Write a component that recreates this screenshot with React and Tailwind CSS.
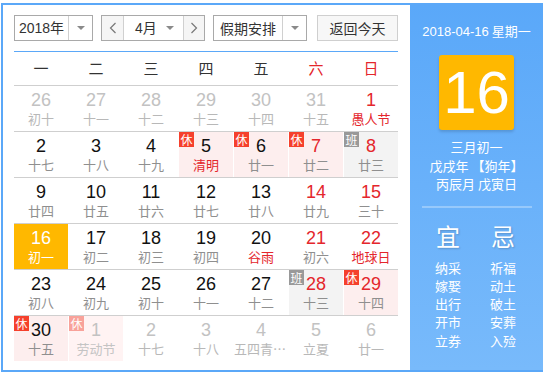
import React from 'react';

const CN = '"Microsoft YaHei", "Noto Sans CJK SC", sans-serif';
const NUM = '"Liberation Sans", Arial, "Noto Sans CJK SC", sans-serif';

const weekdays = ['一', '二', '三', '四', '五', '六', '日'];

// o: other month, r: red number, lr: red lunar, tag: 休/班, dim: faded tag
const rows = [
  [
    { d: 26, l: '初十', o: 1 },
    { d: 27, l: '十一', o: 1 },
    { d: 28, l: '十二', o: 1 },
    { d: 29, l: '十三', o: 1 },
    { d: 30, l: '十四', o: 1 },
    { d: 31, l: '十五', o: 1 },
    { d: 1, l: '愚人节', r: 1, lr: 1 },
  ],
  [
    { d: 2, l: '十七' },
    { d: 3, l: '十八' },
    { d: 4, l: '十九' },
    { d: 5, l: '清明', lr: 1, tag: '休' },
    { d: 6, l: '廿一', tag: '休' },
    { d: 7, l: '廿二', r: 1, tag: '休' },
    { d: 8, l: '廿三', r: 1, tag: '班' },
  ],
  [
    { d: 9, l: '廿四' },
    { d: 10, l: '廿五' },
    { d: 11, l: '廿六' },
    { d: 12, l: '廿七' },
    { d: 13, l: '廿八' },
    { d: 14, l: '廿九', r: 1 },
    { d: 15, l: '三十', r: 1 },
  ],
  [
    { d: 16, l: '初一', today: 1 },
    { d: 17, l: '初二' },
    { d: 18, l: '初三' },
    { d: 19, l: '初四' },
    { d: 20, l: '谷雨', lr: 1 },
    { d: 21, l: '初六', r: 1 },
    { d: 22, l: '地球日', r: 1, lr: 1 },
  ],
  [
    { d: 23, l: '初八' },
    { d: 24, l: '初九' },
    { d: 25, l: '初十' },
    { d: 26, l: '十一' },
    { d: 27, l: '十二' },
    { d: 28, l: '十三', r: 1, tag: '班' },
    { d: 29, l: '十四', r: 1, tag: '休' },
  ],
  [
    { d: 30, l: '十五', tag: '休' },
    { d: 1, l: '劳动节', o: 1, tag: '休', dim: 1 },
    { d: 2, l: '十七', o: 1 },
    { d: 3, l: '十八', o: 1 },
    { d: 4, l: '五四青年节', o: 1 },
    { d: 5, l: '立夏', o: 1 },
    { d: 6, l: '廿一', o: 1 },
  ],
];

const yi = ['纳采', '嫁娶', '出行', '开市', '立券'];
const ji = ['祈福', '动土', '破土', '安葬', '入殓'];

const Caret = () => (
  <span className="block w-0 h-0 border-l-[4px] border-r-[4px] border-t-[4px] border-l-transparent border-r-transparent border-t-[#8a8a8a]" />
);

const DayCell = ({ c }) => {
  let bg = '';
  if (c.today) bg = 'bg-[#ffb800]';
  else if (c.tag === '休') bg = c.dim ? 'bg-[#fff3f3]' : 'bg-[#fdeeee]';
  else if (c.tag === '班') bg = 'bg-[#f3f3f3]';

  let numColor = 'text-[#111]';
  if (c.today) numColor = 'text-white';
  else if (c.o) numColor = 'text-[#c2c2c2]';
  else if (c.r) numColor = 'text-[#e4262c]';

  let lunarColor = 'text-[#8f8f8f]';
  if (c.today) lunarColor = 'text-white';
  else if (c.o) lunarColor = c.dim ? 'text-[#c4c4c4]' : 'text-[#b8b8b8]';
  else if (c.lr) lunarColor = 'text-[#e4262c]';

  const long = c.l.length > 4;

  return (
    <div className={`relative h-[45px] flex flex-col items-center pt-[4px] ${bg}`}>
      {c.tag && (
        <span
          className={`absolute left-0 top-0 w-[15px] h-[15px] flex items-center justify-center text-[12px] leading-none text-white ${
            c.tag === '班' ? 'bg-[#999]' : c.dim ? 'bg-[#f8a29a]' : 'bg-[#f5402c]'
          }`}
          style={{ fontFamily: CN }}
        >
          {c.tag}
        </span>
      )}
      <span className={`text-[18px] leading-[20px] ${numColor}`} style={{ fontFamily: NUM }}>
        {c.d}
      </span>
      <span
        className={`text-[13px] leading-[18px] whitespace-nowrap ${long ? 'w-[54px] overflow-hidden text-ellipsis text-center' : ''} ${lunarColor}`}
        style={{ fontFamily: CN }}
      >
        {c.l}
      </span>
    </div>
  );
};

export default function App() {
  return (
    <div className="w-[543px] h-[376px] bg-white overflow-hidden pt-[3px] pl-[1px]">
      <div className="flex w-[544px] h-[369px] border-2 border-[#5ba8f8]">
        {/* calendar */}
        <div className="w-[407px] pl-[11px] pr-[12px] pt-[10px]">
          <div className="flex items-center h-[26px] text-[14px] text-[#333]" style={{ fontFamily: CN }}>
            <div className="flex items-center w-[79px] h-[26px] border border-[#a9a9a9]">
              <span className="flex-1 text-center" style={{ fontFamily: NUM }}>2018<span style={{ fontFamily: CN }}>年</span></span>
              <span className="w-[24px] h-full border-l border-[#d0d0d0] flex items-center justify-center">
                <Caret />
              </span>
            </div>
            <div className="flex items-center ml-[8px] w-[104px] h-[26px] border border-[#a9a9a9]">
              <span className="w-[22px] h-full flex items-center justify-center bg-[#f5f5f5] border-r border-[#d0d0d0]">
                <svg width="8" height="12" viewBox="0 0 8 12"><path d="M6.5 1 L1.5 6 L6.5 11" fill="none" stroke="#777" strokeWidth="1.2" /></svg>
              </span>
              <span className="flex-1 flex items-center justify-between pl-[11px] pr-[9px]">
                <span style={{ fontFamily: NUM }}>4<span style={{ fontFamily: CN }}>月</span></span>
                <Caret />
              </span>
              <span className="w-[21px] h-full flex items-center justify-center bg-[#f5f5f5] border-l border-[#d0d0d0]">
                <svg width="8" height="12" viewBox="0 0 8 12"><path d="M1.5 1 L6.5 6 L1.5 11" fill="none" stroke="#777" strokeWidth="1.2" /></svg>
              </span>
            </div>
            <div className="flex items-center ml-[8px] w-[94px] h-[26px] border border-[#a9a9a9]">
              <span className="flex-1 text-center">假期安排</span>
              <span className="w-[24px] h-full border-l border-[#d0d0d0] flex items-center justify-center">
                <Caret />
              </span>
            </div>
            <button className="ml-[10px] w-[81px] h-[26px] border border-[#cfcfcf] bg-[#f7f7f7] text-[#333]">
              返回今天
            </button>
          </div>

          <div className="mt-[10px] h-[1px] bg-[#5ba8f8]" />

          <div className="grid grid-cols-7 gap-x-[1px] h-[34px] border-b border-[#cfcfcf]" style={{ fontFamily: CN }}>
            {weekdays.map((w, i) => (
              <div
                key={w}
                className={`flex items-center justify-center text-[15px] ${i >= 5 ? 'text-[#e4262c]' : 'text-[#333]'}`}
              >
                {w}
              </div>
            ))}
          </div>

          {rows.map((r, ri) => (
            <div
              key={ri}
              className={`grid grid-cols-7 gap-x-[1px] ${ri < rows.length - 1 ? 'border-b border-[#cfcfcf]' : ''}`}
            >
              {r.map((c, ci) => (
                <DayCell key={ci} c={c} />
              ))}
            </div>
          ))}
        </div>

        {/* side panel */}
        <div
          className="w-[133px] bg-gradient-to-b from-[#5aa8f9] to-[#78bafb] text-white flex flex-col items-center"
          style={{ fontFamily: CN }}
        >
          <div className="mt-[16px] text-[13px] leading-[20px] whitespace-nowrap">
            <span style={{ fontFamily: NUM }}>2018-04-16</span> 星期一
          </div>
          <div className="mt-[13px] w-[75px] h-[75px] rounded-[3px] bg-[#ffb800] shadow-[0_2px_3px_rgba(0,0,0,0.15)] flex items-center justify-center">
            <span className="text-[60px] leading-none" style={{ fontFamily: NUM }}>16</span>
          </div>
          <div className="mt-[8px] text-[13px] leading-[18.5px] text-center whitespace-nowrap">
            <div>三月初一</div>
            <div>戊戌年 【狗年】</div>
            <div>丙辰月 戊寅日</div>
          </div>
          <div className="mt-[12px] w-[110px] h-[2px] bg-white/30" />
          <div className="flex justify-center gap-[29px] mt-[14px] pr-[2px]">
            <div className="flex flex-col items-center">
              <div className="text-[24px] leading-[28px] [text-shadow:1px_1px_2px_rgba(0,0,0,0.2)]">宜</div>
              <div className="mt-[9px] text-[13px] leading-[18.3px] text-center whitespace-nowrap">
                {yi.map((t) => (
                  <div key={t}>{t}</div>
                ))}
              </div>
            </div>
            <div className="flex flex-col items-center">
              <div className="text-[24px] leading-[28px] [text-shadow:1px_1px_2px_rgba(0,0,0,0.2)]">忌</div>
              <div className="mt-[9px] text-[13px] leading-[18.3px] text-center whitespace-nowrap">
                {ji.map((t) => (
                  <div key={t}>{t}</div>
                ))}
              </div>
            </div>
          </div>
        </div>
      </div>
    </div>
  );
}
